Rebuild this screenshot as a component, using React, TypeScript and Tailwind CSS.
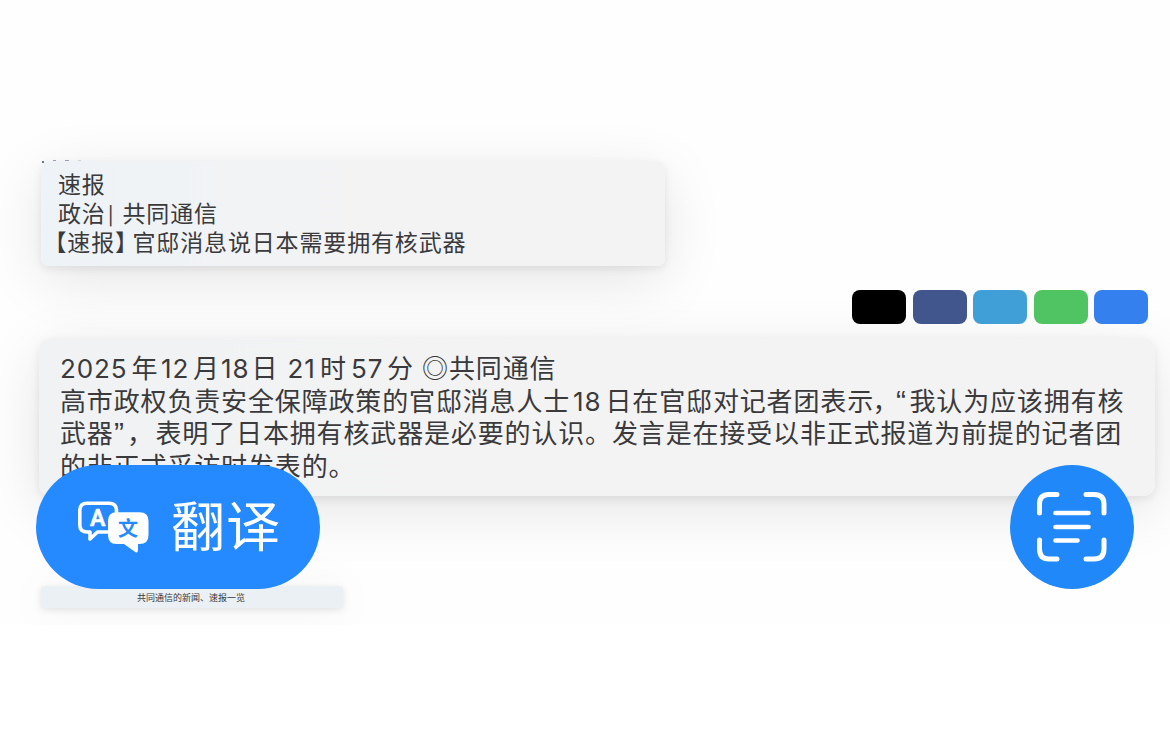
const CJK = "font-['Noto_Sans_CJK_SC',sans-serif]";
const MIXED = "font-['Inter','Noto_Sans_CJK_SC',sans-serif]";

type Segment = { text: string; cls: string };

// The date line mixes latin digits and hanzi, each run has its own width
const dateLine: Segment[] = [
  { text: "2025", cls: "w-[71.5px]" },
  { text: "年", cls: "w-[29.5px]" },
  { text: "12", cls: "w-[32px]" },
  { text: "月", cls: "w-[28px]" },
  { text: "18", cls: "w-[30.5px]" },
  { text: "日", cls: "w-[36px]" },
  { text: "21", cls: "w-[32.5px]" },
  { text: "时", cls: "w-[31px]" },
  { text: "57", cls: "w-[36px]" },
  { text: "分", cls: "w-[35px]" },
  { text: "◎", cls: "w-[27px] leading-none font-['Noto_Sans_CJK_SC',sans-serif]" },
  { text: "共同通信", cls: "" },
];

const bodyLines: Segment[][] = [
  [
    { text: "高市政权负责安全保障政策的官邸消息人士", cls: "w-[513px]" },
    { text: "18", cls: "w-[32.5px]" },
    { text: "日在官邸对记者团表示", cls: "w-[267px]" },
    { text: "，", cls: "w-[23.5px] [font-feature-settings:'halt']" },
    { text: "“", cls: "w-[13.5px] leading-[16px] text-[30px] font-['Liberation_Sans',sans-serif]" },
    { text: "我认为应该拥有核", cls: "" },
  ],
  [
    { text: "武器", cls: "w-[54px]" },
    { text: "”", cls: "w-[13px] leading-[16px] text-[30px] font-['Liberation_Sans',sans-serif]" },
    { text: "，", cls: "w-[28.5px]" },
    { text: "表明了日本拥有核武器是必要的认识。发言是在接受以非正式报道为前提的记者团", cls: "" },
  ],
  [{ text: "的非正式采访时发表的。", cls: "" }],
];

const shareButtons = ["bg-black", "bg-[#40568d]", "bg-[#409fd6]", "bg-[#50c463]", "bg-[#3580ef]"];

const TextLine = ({ segments }: { segments: Segment[] }) => (
  <p className="flex h-[32.5px] items-baseline whitespace-nowrap">
    {segments.map((s, i) => (
      <span key={i} className={`shrink-0 ${s.cls}`}>
        {s.text}
      </span>
    ))}
  </p>
);

const TranslateIcon = () => (
  <svg width="72" height="52" viewBox="0 0 72 52" fill="none" className="shrink-0">
    <path
      d="M10 2.3H32Q39.5 2.3 39.5 9.5V24Q39.5 31 32 31H20.5L13 38V31H10Q2.8 31 2.8 24V9.5Q2.8 2.3 10 2.3Z"
      stroke="white"
      strokeWidth="3.6"
      strokeLinejoin="round"
    />
    <text
      x="20.7"
      y="24.5"
      textAnchor="middle"
      fill="white"
      stroke="white"
      strokeWidth="0.6"
      strokeLinejoin="round"
      fontSize="23"
      fontWeight="600"
      fontFamily="Roboto"
    >
      A
    </text>
    <path
      d="M39.5 11.3H62.5Q71.5 11.3 71.5 20V34Q71.5 43 62.5 43H61V48.5Q61 53 57.5 50.5L47 43H39.5Q31 43 31 34V20Q31 11.3 39.5 11.3Z"
      fill="white"
    />
    <text x="51" y="34.5" textAnchor="middle" fill="#258aff" fontSize="20" fontWeight="700" fontFamily="Noto Sans CJK SC">
      文
    </text>
  </svg>
);

const ScanTextIcon = () => (
  <svg width="72" height="72" viewBox="0 0 72 72" fill="none" stroke="white" strokeLinecap="round">
    <path
      d="M3.5 22V13Q3.5 3.5 13 3.5H21M50 3.5H58Q68 3.5 68 13V22M68 49V58Q68 68 58 68H50M21 68H13Q3.5 68 3.5 58V49"
      strokeWidth="5"
    />
    <path d="M19.5 22H52.5M19.5 36H52.5M19.5 49.5H41.5" strokeWidth="4.6" />
  </svg>
);

const App = () => {
  return (
    <div className="h-[740px] w-[1170px] overflow-hidden bg-white">
      <div className="relative flex h-[625px] flex-col overflow-hidden bg-[#fefefe] pt-[161px] text-[#3a3a3c]">
        <section
          className={`${CJK} relative ml-[41px] h-[105px] w-[624px] rounded-lg bg-linear-to-r from-[#eef3f7] to-[#f3f3f4] to-50% pt-[8px] pl-[17px] text-[23px] tracking-[0.85px] whitespace-nowrap shadow-[0_3px_8px_rgba(0,0,0,0.08),0_14px_60px_rgba(0,0,0,0.1)]`}
        >
          <p className="h-[29px] leading-[29px]">速报</p>
          <p className="flex h-[29px] items-center leading-[29px]">
            <span className="w-[50px]">政治</span>
            <span className="w-[14.5px] text-[19px] font-medium">|</span>
            <span>共同通信</span>
          </p>
          <p className="-ml-[3px] flex h-[29px] leading-[29px]">
            <span className="w-[77.5px] [font-feature-settings:'halt']">【速报】</span>
            <span>官邸消息说日本需要拥有核武器</span>
          </p>
          {/* remains of the cut-off line above */}
          <div className="absolute -top-px left-px flex gap-[9px]">
            <i className="mt-px size-[2px] bg-slate-500" />
            <i className="h-px w-[3px] bg-slate-400" />
            <i className="h-px w-[4px] bg-slate-400" />
            <i className="h-px w-[3px] bg-slate-300" />
          </div>
        </section>

        <div className="relative z-10 mt-6 mr-[22px] flex justify-end gap-[6.5px]">
          {shareButtons.map((color) => (
            <div key={color} className={`h-[34px] w-[54px] rounded-lg ${color}`} />
          ))}
        </div>

        <section
          className={`${MIXED} mt-[14px] ml-[39px] h-[158px] w-[1116px] shrink-0 rounded-xl bg-linear-to-r from-[#f0f2f3] to-[#f3f3f3] to-40% pt-[15px] pl-[21px] text-[26px] leading-[32px] tracking-[0.85px] shadow-[0_3px_10px_rgba(0,0,0,0.08),0_14px_60px_rgba(0,0,0,0.1)]`}
        >
          <TextLine segments={dateLine} />
          {bodyLines.map((line, i) => (
            <TextLine key={i} segments={line} />
          ))}
        </section>

        <section
          className={`${CJK} mt-[90px] ml-[41px] h-[22px] w-[302px] shrink-0 rounded bg-[#ebf0f4] pr-[2px] text-center text-[9px] leading-[24px] shadow-[0_2px_7px_rgba(0,0,0,0.1),0_4px_50px_rgba(0,0,0,0.06)]`}
        >
          共同通信的新闻、速报一览
        </section>

        <button
          className={`${CJK} absolute top-[465px] left-[36px] z-20 flex h-[124px] w-[284px] items-center rounded-full bg-[#258aff] pl-[41px] text-[54px] text-white`}
        >
          <TranslateIcon />
          <span className="ml-[22px] pb-[6px] leading-none tracking-[1px]">翻译</span>
        </button>
        <button className="absolute top-[465px] left-[1010px] z-20 flex size-[124px] items-center justify-center rounded-full bg-[#2188fa]">
          <ScanTextIcon />
        </button>
      </div>
    </div>
  );
};

export default App;
